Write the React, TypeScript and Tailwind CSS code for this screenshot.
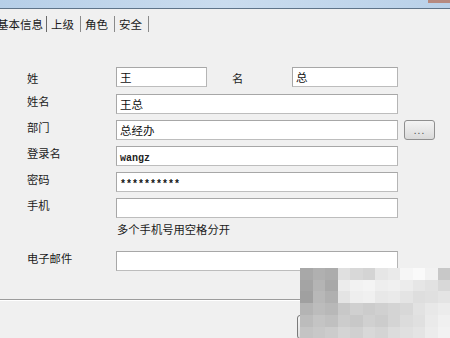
import React from "react";

const MOSAIC: string[][] = [
  ["a8", "b0", "ac", "e0", "d8", "d4", "e6", "ea", "f6", "fa", "f2", "c8"],
  ["a4", "b4", "a8", "ec", "f2", "f4", "ee", "f0", "ec", "e6", "e2", "d8"],
  ["a0", "b8", "b0", "e4", "ee", "f0", "e8", "ea", "e4", "de", "e0", "e4"],
  ["b4", "bc", "b8", "c8", "d0", "cc", "d0", "d4", "d8", "e2", "e8", "ec"],
  ["bc", "c4", "c0", "cc", "c8", "d0", "cc", "d4", "dc", "e0", "ea", "f0"],
  ["c4", "c8", "cc", "d4", "d0", "d8", "d4", "dc", "e0", "e4", "ec", "f2"],
];

function Box({
  w = "w-[282px]",
  children,
  className = "",
}: {
  w?: string;
  children?: React.ReactNode;
  className?: string;
}) {
  return (
    <div
      className={`h-[20px] ${w} border border-[#a7a7a7] border-b-[#bdbdbd] border-r-[#b5b5b5] bg-white pl-[3px] text-[11.5px] leading-[18px] text-[#111] ${className}`}
    >
      {children}
    </div>
  );
}

function Label({ children, className = "" }: { children: React.ReactNode; className?: string }) {
  return <div className={`w-[89px] shrink-0 text-[11.3px] leading-[14px] text-[#1a1a1a] ${className}`}>{children}</div>;
}

export default function App() {
  const tabs = ["上级", "角色", "安全"];
  return (
    <div
      className="relative h-[338px] w-[450px] overflow-hidden bg-[#f0f0f0]"
      style={{ fontFamily: '"Noto Sans CJK SC", "Noto Sans", sans-serif' }}
    >
      {/* window title bar, cut off at top */}
      <div className="flex h-[9px] justify-end border-b border-[#5f7489] bg-gradient-to-r from-[#b6cfe8] via-[#cadcee] to-[#b9d1e9]">
        <div className="h-[3px] w-[22px] bg-[#b68a80]" />
      </div>

      {/* tabs */}
      <div className="mt-[7px] flex h-[16px] text-[11.5px] leading-[16px] text-[#1a1a1a]">
        <div className="-ml-[3px] border-r border-[#6a6a6a] pr-[3px]">基本信息</div>
        {tabs.map((t) => (
          <div key={t} className="border-r border-[#8a8a8a] pl-[4px] pr-[6px]">
            {t}
          </div>
        ))}
      </div>

      {/* form */}
      <div className="mt-[35px] pl-[27px]">
        <div className="flex items-start">
          <Label className="mt-[4px]">姓</Label>
          <Box w="w-[91px]">王</Box>
          <div className="ml-[25px] mt-[4px] w-[60px] text-[11.3px] leading-[14px] text-[#1a1a1a]">名</div>
          <Box w="w-[106px]">总</Box>
        </div>

        <div className="mt-[7px] flex items-start">
          <Label>姓名</Label>
          <Box className="bg-[#fbfbfb] text-[#7a7a7a]">王总</Box>
        </div>

        <div className="mt-[6px] flex items-start">
          <Label>部门</Label>
          <Box>总经办</Box>
          <div className="ml-[6px] flex h-[20px] w-[31px] items-center justify-center rounded-[3px] border border-[#8f8f8f] bg-gradient-to-b from-[#f4f4f4] to-[#dadada] text-[10px] leading-none tracking-[1px] text-[#555]">
            ...
          </div>
        </div>

        <div className="mt-[6px] flex items-start">
          <Label>登录名</Label>
          <Box>
            <span className="text-[10px] font-semibold text-[#222]" style={{ fontFamily: '"Liberation Mono", monospace' }}>
              wangz
            </span>
          </Box>
        </div>

        <div className="mt-[6px] flex items-start">
          <Label>密码</Label>
          <Box>
            <span className="text-[10px] font-bold" style={{ fontFamily: '"Liberation Mono", monospace' }}>
              **********
            </span>
          </Box>
        </div>

        <div className="mt-[6px] flex items-start">
          <Label>手机</Label>
          <Box />
        </div>
        <div className="ml-[90px] mt-[4px] text-[11.3px] leading-[14px] text-[#1a1a1a]">多个手机号用空格分开</div>

        <div className="mt-[15px] flex items-start">
          <Label>电子邮件</Label>
          <Box />
        </div>
      </div>

      {/* bottom separator and button */}
      <div className="mt-[28px] h-[1px] bg-[#9c9c9c]" />
      <div className="h-[1px] bg-white" />
      <div className="ml-[297px] mt-[14px] h-[24px] w-[76px] rounded-[3px] border border-[#7a7a7a] bg-gradient-to-b from-[#f6f6f6] to-[#dddddd]" />

      {/* pixelated watermark */}
      <svg className="absolute left-[300px] top-[268px]" width="150" height="70" viewBox="0 0 150 70" shapeRendering="crispEdges">
        {MOSAIC.map((row, r) =>
          row.map((g, c) => (
            <rect key={`${r}-${c}`} x={c * 12.5} y={r * 11.7} width="12.6" height="11.8" fill={`#${g}${g}${g}`} />
          ))
        )}
      </svg>
    </div>
  );
}
